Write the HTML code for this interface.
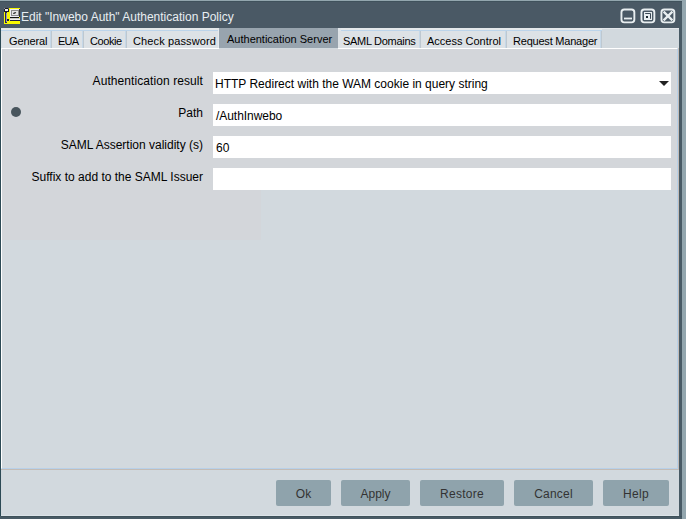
<!DOCTYPE html>
<html><head><meta charset="utf-8">
<style>
*{margin:0;padding:0;box-sizing:border-box}
html,body{width:686px;height:519px;overflow:hidden;background:#93a6ae;font-family:"Liberation Sans",sans-serif}
.a{position:absolute}
.t{position:absolute;white-space:nowrap;line-height:1}
#frame{left:0;top:1px;width:682px;height:518px;background:#485a65;border-top:1px solid #40525c}
#title{left:21px;top:11px;font-size:12px;color:#e8eef2}
.wb{position:absolute;top:9px;width:15px;height:15px;border:2px solid #e6ecee;border-radius:3px}
#strip{left:1px;top:28px;width:678px;height:20px;background:#d2d9de;border-top:1px solid #e2e6ea}
.tab{position:absolute;top:28px;height:20px;background:#dde2e6;border-top:2px solid #e4e8ea}
.tab::before{content:"";position:absolute;left:0;right:0;top:0;height:1px;background:#bcd4ea}
.sep{position:absolute;top:31px;width:2px;height:17px;border-left:1px solid #c6d8e8;background:#bec8d0;margin-left:-1px}
.tl{position:absolute;top:36px;font-size:11px;color:#000;white-space:nowrap;line-height:1}
#active{left:219px;top:28px;width:119px;height:20px;background:#98a4ae}
#content{left:1px;top:48px;width:677px;height:421px;background:#d2d9de;border-top:1px solid #fff;border-left:1px solid #fff;border-right:1px solid #b8d0e8;border-bottom:1px solid #b8d0e8}
#btnbar{left:1px;top:469px;width:678px;height:47px;background:#d2d9de;border-bottom:1px solid #dce3e8}
.lbl{position:absolute;font-size:12px;color:#000;white-space:nowrap;line-height:1;text-align:right;right:483px}
.fld{position:absolute;left:213px;width:458px;height:22px;background:#fff}
.ftx{position:absolute;left:215px;font-size:12px;color:#000;white-space:nowrap;line-height:1}
.btn{position:absolute;top:480px;height:26px;background:#8fa3ac;border-radius:2px;font-size:12px;color:#333;text-align:center;line-height:1;padding-top:8px}
</style></head><body>
<div id="frame" class="a"></div>
<div class="a" style="left:0;top:2px;width:679px;height:26px;background:#4a5965"></div>
<div class="a" style="left:0;top:28px;width:1px;height:488px;background:#2c4a55"></div>
<div class="a" style="left:1px;top:516px;width:681px;height:1px;background:#3e515a"></div>
<!-- icon -->
<svg class="a" style="left:4px;top:8px" width="16" height="16" viewBox="0 0 16 16" shape-rendering="crispEdges">
<rect x="0" y="0" width="16" height="16" fill="#f8f800"/>
<rect x="0" y="0" width="5" height="4" fill="#1a1a28"/>
<rect x="0" y="0" width="1" height="1" fill="#8a8a90"/>
<rect x="4" y="0" width="1" height="1" fill="#5a5a60"/>
<rect x="1" y="1" width="3" height="2" fill="#f0f0f0"/>
<rect x="1" y="4" width="2" height="11" fill="#2c2848"/>
<rect x="2" y="5" width="1" height="9" fill="#9a96bc"/>
<rect x="3" y="11" width="2" height="2" fill="#1a1a30"/>
<rect x="6" y="1" width="10" height="8" fill="#eeeef4"/>
<rect x="15" y="1" width="1" height="8" fill="#303030"/>
<rect x="7" y="2" width="8" height="6" fill="#8c8c8c"/>
<rect x="8" y="3" width="6" height="4" fill="#e4e4e4"/>
<ellipse cx="10.6" cy="5" rx="1.7" ry="0.8" transform="rotate(-22 10.6 5)" fill="#404040" shape-rendering="auto"/>
<rect x="6" y="9" width="9" height="1" fill="#141414"/>
<rect x="6" y="10" width="10" height="1" fill="#c8c8c0"/>
<rect x="6" y="11" width="10" height="1" fill="#f0f0f0"/>
<rect x="6" y="12" width="10" height="1" fill="#1c1c44"/>
</svg>
<div id="title" class="t">Edit "Inwebo Auth" Authentication Policy</div>
<!-- window buttons -->
<svg class="a" style="left:600px;top:0" width="82" height="28" viewBox="600 0 82 28">
<g fill="none" stroke="#e8eef0" stroke-width="1.9">
<rect x="621.45" y="9.45" width="12.9" height="12.9" rx="2.8"/>
<rect x="641.45" y="9.45" width="12.9" height="12.9" rx="2.8"/>
<rect x="661.45" y="9.45" width="12.9" height="12.9" rx="2.8"/>
<path d="M663.6 11.6L672.4 20.4M672.4 11.6L663.6 20.4" stroke-width="2.3"/>
</g>
<rect x="624" y="17.6" width="8" height="1.8" fill="#e8eef0"/>
<rect x="644" y="12" width="8" height="8" fill="#e8eef0"/>
<path d="M645.2 13.5H650.5V18.8" fill="none" stroke="#3c4a56" stroke-width="1"/>
<rect x="646" y="16" width="2" height="2" fill="#1e2a32"/>
</svg>

<div id="strip" class="a"></div>
<div class="tab" style="left:1px;width:50px"></div>
<div class="tab" style="left:51px;width:32px"></div>
<div class="tab" style="left:83px;width:43px"></div>
<div class="tab" style="left:126px;width:93px"></div>
<div class="tab" style="left:338px;width:82px"></div>
<div class="tab" style="left:420px;width:86px"></div>
<div class="tab" style="left:506px;width:96px"></div>
<div class="sep" style="left:51px"></div>
<div class="sep" style="left:83px"></div>
<div class="sep" style="left:126px"></div>
<div class="sep" style="left:420px"></div>
<div class="sep" style="left:506px"></div>
<div class="sep" style="left:601px"></div>
<div class="a" style="left:218px;top:30px;width:1px;height:18px;background:#e6eaee"></div>
<div class="a" style="left:338px;top:28px;width:3px;height:3px;background:#dfe5ea"></div>
<div id="active" class="a"></div>
<div class="tl" style="left:9px;letter-spacing:-0.12px">General</div>
<div class="tl" style="left:58px;letter-spacing:-0.75px">EUA</div>
<div class="tl" style="left:90px;letter-spacing:-0.42px">Cookie</div>
<div class="tl" style="left:133px;letter-spacing:0.12px">Check password</div>
<div class="tl" style="left:227px;top:34px">Authentication Server</div>
<div class="tl" style="left:343px;letter-spacing:-0.3px">SAML Domains</div>
<div class="tl" style="left:427px">Access Control</div>
<div class="tl" style="left:513px;letter-spacing:-0.21px">Request Manager</div>

<div id="content" class="a"></div>
<div id="btnbar" class="a"></div>
<div class="a" style="left:2px;top:49px;width:675px;height:141px;background:#d3d6da"></div>
<div class="a" style="left:2px;top:190px;width:259px;height:50px;background:#d3d6da"></div>
<div class="a" style="left:1px;top:469px;width:678px;height:1px;background:#c3bcb6"></div>
<div class="a" style="left:678px;top:48px;width:1px;height:422px;background:#c3bcb6"></div>
<div class="a" style="left:219px;top:48px;width:119px;height:1px;background:#d2d9de"></div>

<div class="lbl" style="top:75px;letter-spacing:0.08px">Authentication result</div>
<div class="fld" style="top:72px"></div>
<div class="ftx" style="top:78px">HTTP Redirect with the WAM cookie in query string</div>
<svg class="a" style="left:659px;top:81px" width="10" height="5" viewBox="0 0 10 5"><path d="M0 0H10L5 5Z" fill="#222"/></svg>

<div class="a" style="left:11px;top:107px;width:10px;height:10px;border-radius:50%;background:#48555d"></div>
<div class="lbl" style="top:107px">Path</div>
<div class="fld" style="top:104px"></div>
<div class="ftx" style="top:110px;left:216px;letter-spacing:-0.05px">/AuthInwebo</div>

<div class="lbl" style="top:139px">SAML Assertion validity (s)</div>
<div class="fld" style="top:136px"></div>
<div class="ftx" style="top:142px;left:216px">60</div>

<div class="lbl" style="top:171px">Suffix to add to the SAML Issuer</div>
<div class="fld" style="top:168px"></div>

<div class="btn" style="left:276px;width:55px">Ok</div>
<div class="btn" style="left:341px;width:69px">Apply</div>
<div class="btn" style="left:420px;width:84px;letter-spacing:0.25px">Restore</div>
<div class="btn" style="left:514px;width:79px;letter-spacing:0.2px">Cancel</div>
<div class="btn" style="left:603px;width:66px;letter-spacing:0.3px">Help</div>
</body></html>
